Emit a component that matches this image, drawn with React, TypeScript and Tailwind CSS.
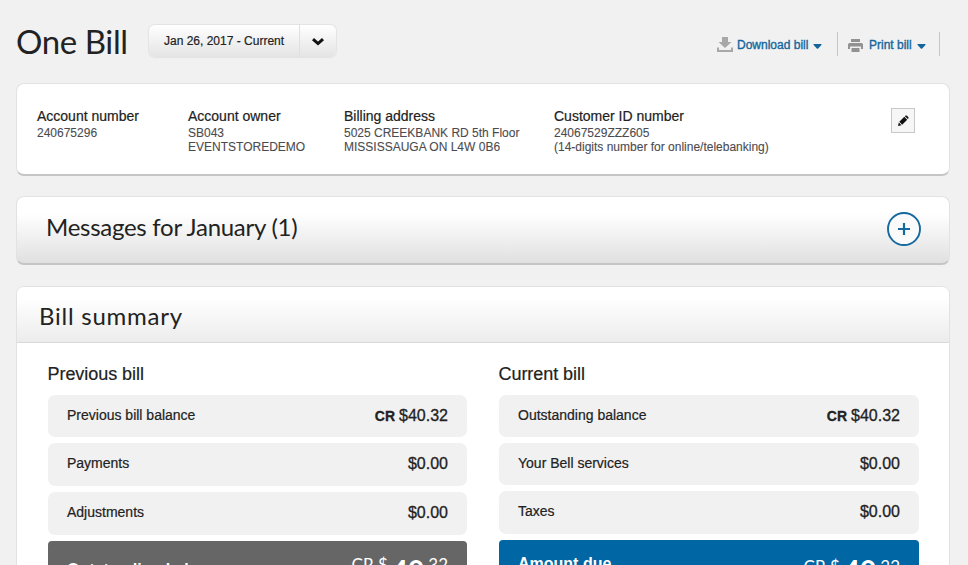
import type { ReactNode } from "react";

const SANS = "font-['Liberation_Sans',Arial,sans-serif]";

function Caret() {
  return (
    <svg className="mt-[2px]" width="9" height="5" viewBox="0 0 9 5" fill="#14669c">
      <path d="M0.8 0H8.2Q9 .3 8.4 1L5.2 4.4Q4.5 5 3.8 4.4L.6 1Q0 .3 .8 0Z" />
    </svg>
  );
}

function Info({ title, lines, width }: { title: string; lines: string[]; width: string }) {
  return (
    <div className={width}>
      <h3 className="mb-px text-[14px] leading-[17px] text-[#222] [-webkit-text-stroke:0.2px]">{title}</h3>
      {lines.map((line) => (
        <p key={line} className="text-[12px] leading-[14px] text-[#4b4b4f] [-webkit-text-stroke:0.1px]">
          {line}
        </p>
      ))}
    </div>
  );
}

function Row({ label, amount, credit, height }: { label: string; amount: string; credit?: boolean; height: string }) {
  return (
    <div className={"flex items-start justify-between rounded-[7px] bg-[#f1f1f1] px-[19px] " + height}>
      <span className="mt-[12px] text-[14px] leading-4 text-[#222] [-webkit-text-stroke:0.2px]">{label}</span>
      <span className="mt-[12px] text-[16px] leading-[18px] text-[#222] [-webkit-text-stroke:0.3px]">
        {credit && <b className="mr-[4px] text-[14px]">CR</b>}
        {amount}
      </span>
    </div>
  );
}

type TotalProps = { label: string; color: string; labelPad: string; smallPad: string; bigPad: string };

function Total({ label, color, labelPad, smallPad, bigPad }: TotalProps) {
  return (
    <div className={"flex h-[60px] items-start justify-between rounded-t-[4px] px-[19px] text-white " + color}>
      <span className={"text-[16px] font-bold leading-5 " + labelPad}>{label}</span>
      <span className="flex items-start font-['Lato',sans-serif]">
        <span className={"text-[17px] leading-5 " + smallPad}>CR $</span>
        <b className={"ml-1 text-[28px] leading-8 " + bigPad}>40</b>
        <span className={"text-[17px] leading-5 " + smallPad}>.32</span>
      </span>
    </div>
  );
}

function Column({ title, width, children }: { title: string; width: string; children: ReactNode }) {
  return (
    <section className={width}>
      <h3 className="mb-[10px] ml-[-0.5px] text-[18px] leading-[22px] tracking-[-0.05px] text-[#222] [-webkit-text-stroke:0.2px]">
        {title}
      </h3>
      <div className="flex flex-col gap-[6px]">{children}</div>
    </section>
  );
}

export default function App() {
  return (
    <main className={"h-[565px] w-[968px] overflow-hidden bg-[#f1f1f1] px-4 " + SANS}>
      <header className="flex h-[83px] items-start">
        <h1 className="mt-[21px] w-[133px] whitespace-nowrap font-['Lato',sans-serif] text-[33px] leading-10 tracking-[-0.4px] text-[#222]">
          One Bill
        </h1>
        <button className="mt-[25px] flex h-[32px] w-[187px] items-stretch rounded-[6px] bg-gradient-to-b from-white to-[#e4e4e4] shadow-[0_0_1px_1px_#e3e3e3]">
          <span className="w-[151px] border-r border-[#e0e0e0] pl-[15px] pt-[8px] text-left text-[12px] leading-4 text-[#222] [-webkit-text-stroke:0.2px]">
            Jan 26, 2017 - Current
          </span>
          <span className="flex flex-1 items-center justify-center">
            <svg className="mt-px" width="12" height="8" viewBox="0 0 12 8" fill="none" stroke="#111" strokeWidth="3">
              <path d="M1 1.2L6 5.6L11 1.2" />
            </svg>
          </span>
        </button>
        <nav className="ml-auto mr-[12px] mt-[32px] flex h-6 items-stretch text-[12px] text-[#14669c] [-webkit-text-stroke:0.35px]">
          <a className="flex w-[121px] items-center border-r border-[#c6c6c6] pt-[2px]">
            <svg width="16" height="16" viewBox="0 0 16 16" fill="#a8a8a8">
              <path d="M5 0h6v5h3.500L8 11 1.500 5H5zM0 10.500h2V13h12v-2.500h2V15H0z" />
            </svg>
            <span className="ml-1">Download bill</span>
            <span className="ml-[5px]"><Caret /></span>
          </a>
          <a className="flex w-[102px] items-center border-r border-[#c6c6c6] pl-[10px] pt-[2px]">
            <svg className="mt-px" width="15" height="15" viewBox="0 0 15 15" fill="#929292">
              <path d="M3 1h9v3H3zM1.5 5h12Q15 5 15 6.500V11h-2V8.500H2V11H0V6.500Q0 5 1.500 5zM3.500 10h8v4h-8z" />
            </svg>
            <span className="ml-[6px]">Print bill</span>
            <span className="ml-[5px]"><Caret /></span>
          </a>
        </nav>
      </header>

      <section className="flex h-[93px] w-[934px] rounded-[8px] border border-b-2 border-[#e2e2e2] border-b-[#c5c5c5] bg-white pl-5 pt-[24px]">
        <Info title="Account number" width="w-[151px]" lines={["240675296"]} />
        <Info title="Account owner" width="w-[156px]" lines={["SB043", "EVENTSTOREDEMO"]} />
        <Info title="Billing address" width="w-[210px]" lines={["5025 CREEKBANK RD 5th Floor", "MISSISSAUGA ON L4W 0B6"]} />
        <Info title="Customer ID number" width="w-[337px]" lines={["24067529ZZZ605", "(14-digits number for online/telebanking)"]} />
        <button className="flex h-[25px] w-[24px] items-center justify-center border border-[#c8c8c8] bg-[#f6f6f6]">
          <svg width="12" height="12" viewBox="0 0 12 12" fill="#111">
            <path d="M1 11L1.800 7.500L4.500 10.200ZM2.300 6.800L7.300 1.800L10.200 4.700L5.200 9.700ZM7.900 1.200L8.600 .6Q9.300 .1 10 .8L11.200 2Q11.900 2.700 11.400 3.400L10.800 4.100Z" />
          </svg>
        </button>
      </section>

      <section className="mt-5 flex h-[69px] w-[934px] items-start justify-between rounded-[8px] border border-b-2 border-[#e2e2e2] border-b-[#c5c5c5] bg-gradient-to-b from-white from-25% to-[#e0e0e0] pl-[29px] pr-[28px]">
        <h2 className="mt-[15px] font-['Lato',sans-serif] text-[24px] leading-[30px] tracking-[-0.27px] text-[#222]">
          Messages for January (1)
        </h2>
        <svg className="mt-[15px]" width="34" height="34" viewBox="0 0 34 34" fill="none" stroke="#14699e">
          <circle cx="17" cy="17" r="16" strokeWidth="1.900" fill="#fafafa" />
          <path d="M11 17H23M17 11V23" strokeWidth="2.200" />
        </svg>
      </section>

      <section className="mt-[21px] h-[300px] w-[934px] rounded-t-[8px] border border-[#e2e2e2] bg-white">
        <div className="h-[56px] rounded-t-[7px] border-b border-[#d9d9d9] bg-gradient-to-b from-white from-20% to-[#ececec] pl-[22px] pt-[14px]">
          <h2 className="font-['Lato',sans-serif] text-[24px] leading-[30px] tracking-[0.75px] text-[#222]">Bill summary</h2>
        </div>
        <div className="flex gap-8 pl-[31px] pt-5">
          <Column title="Previous bill" width="w-[419px]">
            <Row label="Previous bill balance" amount="$40.32" credit height="h-[42px]" />
            <Row label="Payments" amount="$0.00" height="h-[43px]" />
            <Row label="Adjustments" amount="$0.00" height="h-[43px]" />
            <Total label="Outstanding balance" color="bg-[#666]" labelPad="mt-[19px]" smallPad="mt-[14px]" bigPad="mt-[13px]" />
          </Column>
          <Column title="Current bill" width="w-[420px]">
            <Row label="Outstanding balance" amount="$40.32" credit height="h-[42px]" />
            <Row label="Your Bell services" amount="$0.00" height="h-[42px]" />
            <Row label="Taxes" amount="$0.00" height="h-[43px]" />
            <Total label="Amount due" color="bg-[#0066a4]" labelPad="mt-[14px]" smallPad="mt-[17px]" bigPad="mt-[14px]" />
          </Column>
        </div>
      </section>
    </main>
  );
}
